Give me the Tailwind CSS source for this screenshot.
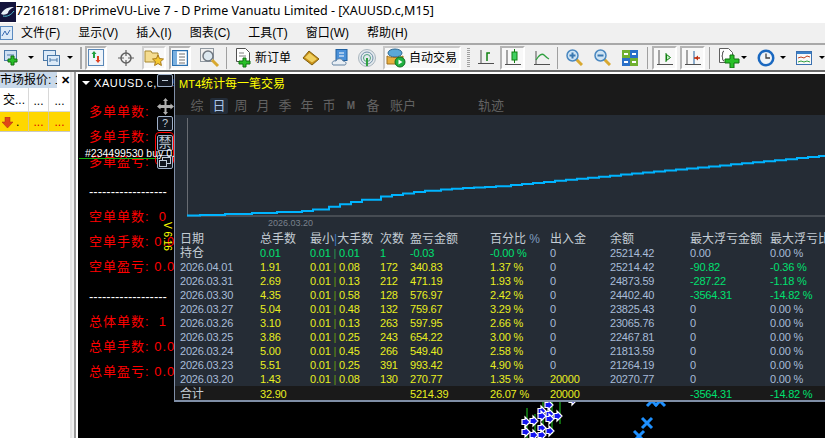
<!DOCTYPE html>
<html lang="en">
<head>
<meta charset="UTF-8">
<title>MT4</title>
<script src="https://cdn.jsdelivr.net/npm/@tailwindcss/browser@4"></script>
</head>
<body class="bg-white overflow-hidden font-['Liberation_Sans','Noto_Sans_CJK_SC',sans-serif]">
<div class="relative w-[825px] h-[438px] overflow-hidden flex flex-col">

  <!-- Title bar -->
  <div class="h-[23px] shrink-0 bg-white flex items-center">
    <svg width="16" height="20" viewBox="0 0 16 20"><rect width="16" height="20" fill="#14143c"/><path d="M1 12C4 6 9 5 14 5C10 7 8 9 8 11C6 13 3 13 1 12Z" fill="#e8f0f8"/><path d="M3 14C7 15 11 13 14 9" stroke="#50c0d0" fill="none"/></svg>
    <span class="font-['Noto_Sans','Noto_Sans_CJK_SC',sans-serif] text-[12.5px] text-black whitespace-nowrap">7216181: DPrimeVU-Live 7 - D Prime Vanuatu Limited - [XAUUSD.c,M15]</span>
  </div>

  <!-- Menu -->
  <div class="h-[20px] shrink-0 bg-[#f0f0f0] flex items-center text-[12px] text-black relative">
    <svg class="absolute left-0 top-[3px]" width="13" height="14" viewBox="0 0 13 14"><rect x="0.5" y="0.5" width="12" height="13" fill="#dceaf8" stroke="#5a8ac0"/><path d="M2 10L5 5L7 9L10 4" stroke="#3a6ab0" fill="none"/></svg>
    <div class="flex gap-[18px] pl-[21px] whitespace-nowrap">
      <span>文件(F)</span><span>显示(V)</span><span>插入(I)</span><span>图表(C)</span><span>工具(T)</span><span>窗口(W)</span><span>帮助(H)</span>
    </div>
  </div>

  <!-- Toolbar -->
  <div class="h-[29px] shrink-0 bg-[#f0f0f0] border-t-2 border-t-[#a8a8a8] border-b-2 border-b-[#6a6a6a] flex items-center">
    <svg class="ml-[4px] w-[17px] h-[18px]" viewBox="0 0 17 18"><rect x="0.5" y="1.5" width="12" height="10" fill="#cfe0f2" stroke="#4a78a8"/><path d="M3 6h7" stroke="#4a78a8"/><path d="M7 7h3v3h3v3h-3v3H7v-3H4v-3h3z" fill="#28c028" stroke="#107010"/></svg>
    <div class="ml-[7px] w-0 h-0 border-x-[3px] border-x-transparent border-t-[3px] border-t-black"></div>
    <svg class="ml-[9px] w-[17px] h-[18px]" viewBox="0 0 17 18"><rect x="0.5" y="1.5" width="12" height="10" fill="#dceaf8" stroke="#4a78a8"/><rect x="4.5" y="6.5" width="12" height="10" fill="#dceaf8" stroke="#4a78a8"/><path d="M7 11h7M7 9v4M14 9v4" stroke="#4a78a8"/></svg>
    <div class="ml-[7px] w-0 h-0 border-x-[3px] border-x-transparent border-t-[3px] border-t-black"></div>
    <div class="ml-[7px] w-[2px] h-[22px] bg-[#a8a8a8]"></div>
    <div class="ml-[3px] w-[22px] h-[24px] bg-[#f8f8f8] border-2 border-t-[#b4b4b4] border-l-[#b4b4b4] border-r-white border-b-white flex items-center justify-center">
      <svg width="16" height="17" viewBox="0 0 16 17"><rect x="0.5" y="0.5" width="15" height="16" fill="#eef4fa" stroke="#5a88b8"/><path d="M5 9V5H3.5L6 2l2.500 3H7v4z" fill="#20a040"/><path d="M9 7v4H7.500L10 14l2.500-3H11V7z" fill="#e04020"/></svg>
    </div>
    <svg class="ml-[11px] w-[16px] h-[16px]" viewBox="0 0 16 16" fill="none" stroke="#606060"><circle cx="8" cy="8" r="5" stroke-width="1.500"/><path d="M8 0v6M8 10v6M0 8h6M10 8h6" stroke-width="1.200"/></svg>
    <div class="ml-[8px] w-[24px] h-[24px] bg-[#f8f8f8] border-2 border-t-[#d0d0d0] border-l-[#d0d0d0] border-r-white border-b-white flex items-center justify-center">
      <svg width="20" height="19" viewBox="0 0 20 19"><path d="M1 3h6l1 2h6v9H1z" fill="#f4dc90" stroke="#a88830"/><path d="M14 7l1.600 3.600 3.900.4-2.900 2.600.8 3.900-3.400-2-3.400 2 .8-3.900-2.900-2.600 3.900-.4z" fill="#f4c830" stroke="#a87818"/></svg>
    </div>
    <div class="ml-[3px] w-[22px] h-[24px] bg-[#f8f8f8] border-2 border-t-[#b4b4b4] border-l-[#b4b4b4] border-r-white border-b-white flex items-center justify-center">
      <svg width="16" height="16" viewBox="0 0 16 16"><rect x="0.5" y="0.5" width="15" height="15" fill="#fff" stroke="#2a70b0" stroke-width="1.500"/><rect x="1" y="1" width="4" height="14" fill="#7ab0e0"/><path d="M7 4h6M7 7h6M7 10h6M7 13h6" stroke="#707070"/></svg>
    </div>
    <svg class="ml-[9px] w-[20px] h-[20px]" viewBox="0 0 20 20"><rect x="0.5" y="0.5" width="13" height="13" fill="#f0f0f0" stroke="#9098a0"/><circle cx="8" cy="8" r="5" fill="#dce8f0" stroke="#707880" stroke-width="1.500"/><path d="M12 12l6 6" stroke="#d8a830" stroke-width="3"/></svg>
    <div class="ml-[6px] w-[1px] h-[22px] bg-[#a0a0a0]"></div>
    <svg class="ml-[9px] w-[15px] h-[20px] overflow-visible" viewBox="0 0 15 20"><path d="M0.500 0.500h9l4 4v9h-13z" fill="#fff" stroke="#505050"/><path d="M3 5h5M3 8h7" stroke="#808080"/><path d="M7 10h3v3h4v3h-4v3H7v-3H3v-3h4z" fill="#28c028" stroke="#107010"/></svg>
    <span class="ml-[4px] w-[36px] text-[12px] text-black whitespace-nowrap">新订单</span>
    <svg class="ml-[11px] w-[18px] h-[16px]" viewBox="0 0 18 16"><path d="M1 8L7 1L17 9L10 15Z" fill="#c89018" stroke="#806010"/><path d="M3 7.500L7.500 3L15 9L10 12.500Z" fill="#f0d060"/></svg>
    <svg class="ml-[11px] w-[18px] h-[18px]" viewBox="0 0 18 18"><rect x="5" y="0.500" width="11" height="11" fill="#4a90d8" stroke="#2060a0"/><path d="M8 4h5M8 7h5" stroke="#fff"/><path d="M2 16c-2-2 0-5 3-4 1-3 6-3 7 0 3 0 4 3 2 4z" fill="#e8eef4" stroke="#6080a0"/></svg>
    <svg class="ml-[9px] w-[18px] h-[18px]" viewBox="0 0 18 18" fill="none"><circle cx="9" cy="9" r="8.500" fill="#e4eaee" stroke="#a8b4bc"/><circle cx="9" cy="9" r="6" stroke="#7090a8"/><circle cx="9" cy="9" r="3.500" stroke="#50a080"/><path d="M9 9v8" stroke="#30a040" stroke-width="2"/></svg>
    <div class="ml-[7px] w-[78px] h-[24px] bg-[#f8f8f8] border-2 border-t-[#c8c8c8] border-l-[#c8c8c8] border-r-white border-b-white flex items-center pl-[1px]">
      <svg width="21" height="20" viewBox="0 0 21 20"><ellipse cx="9" cy="5" rx="7" ry="4" fill="#5aa8d8" stroke="#306890"/><path d="M1 8c3 2 13 2 16 0v8H1z" fill="#e8b040" stroke="#a07020"/><circle cx="14" cy="14" r="5" fill="#20b040" stroke="#107020"/><path d="M12.500 11.500v5l4-2.500z" fill="#fff"/></svg>
      <span class="ml-[2px] text-[12px] text-black whitespace-nowrap">自动交易</span>
    </div>
    <div class="ml-[6px] w-[3px] h-[20px] bg-[repeating-linear-gradient(to_bottom,#a0a0a0_0,#a0a0a0_1px,transparent_1px,transparent_2px)]"></div>
    <svg class="ml-[8px] w-[16px] h-[16px]" viewBox="0 0 16 16" fill="none"><path d="M3 0v14M0 13.500h16" stroke="#505050"/><path d="M9 11V3h3" stroke="#108010" stroke-width="1.500"/></svg>
    <div class="ml-[6px] w-[25px] h-[24px] bg-[#f8f8f8] border-2 border-t-[#b4b4b4] border-l-[#b4b4b4] border-r-white border-b-white flex items-center justify-center">
      <svg width="16" height="17" viewBox="0 0 16 17" fill="none"><path d="M2 1v15M0 15.500h16" stroke="#505050"/><path d="M9.500 0v14" stroke="#108010"/><rect x="7" y="3" width="5" height="8" fill="#40d060" stroke="#108010"/></svg>
    </div>
    <svg class="ml-[9px] w-[16px] h-[16px]" viewBox="0 0 16 16" fill="none"><path d="M2 1v14M0 14.500h16" stroke="#505050"/><path d="M2 10C5 5 8 3 10 5C12 7 13 8 15 9" stroke="#30a040" stroke-width="1.300"/></svg>
    <div class="ml-[7px] w-[1px] h-[22px] bg-[#a0a0a0]"></div>
    <svg class="ml-[8px] w-[17px] h-[17px]" viewBox="0 0 17 17"><path d="M10 10l6 6" stroke="#d8a830" stroke-width="3"/><circle cx="6.500" cy="6.500" r="5.500" fill="#cfe4f4" stroke="#4a88c0" stroke-width="1.500"/><path d="M3.500 6.500h6M6.500 3.500v6" stroke="#3a78b0" stroke-width="2"/></svg>
    <svg class="ml-[11px] w-[17px] h-[17px]" viewBox="0 0 17 17"><path d="M10 10l6 6" stroke="#d8a830" stroke-width="3"/><circle cx="6.500" cy="6.500" r="5.500" fill="#cfe4f4" stroke="#4a88c0" stroke-width="1.500"/><path d="M3.500 6.500h6" stroke="#3a78b0" stroke-width="2"/></svg>
    <svg class="ml-[11px] w-[16px] h-[16px]" viewBox="0 0 16 16"><rect width="8" height="8" fill="#70b030"/><rect x="8" width="8" height="8" fill="#2a70c8"/><rect y="8" width="8" height="8" fill="#2a70c8"/><rect x="8" y="8" width="8" height="8" fill="#70b030"/><path d="M2 4h4M10 4h4M2 12h4M10 12h4" stroke="#fff" stroke-width="2"/></svg>
    <div class="ml-[9px] w-[1px] h-[22px] bg-[#a0a0a0]"></div>
    <div class="ml-[4px] w-[25px] h-[24px] bg-[#f8f8f8] border-2 border-t-[#b4b4b4] border-l-[#b4b4b4] border-r-white border-b-white flex items-center justify-center">
      <svg width="16" height="16" viewBox="0 0 16 16" fill="none"><path d="M2 0v15M0 14.500h16" stroke="#505050"/><path d="M9 3v9M9.500 4.500l4 3-4 3z" stroke="#108010" fill="#c8f0c8"/></svg>
    </div>
    <div class="ml-[3px] w-[25px] h-[24px] bg-[#f8f8f8] border-2 border-t-[#b4b4b4] border-l-[#b4b4b4] border-r-white border-b-white flex items-center justify-center">
      <svg width="16" height="16" viewBox="0 0 16 16" fill="none"><path d="M2 0v15M0 14.500h16" stroke="#505050"/><path d="M9 1v13" stroke="#2060a0"/><path d="M9 8h6" stroke="#c03010" stroke-width="1.500"/><path d="M10 8l3-2.500v5z" fill="#c03010"/></svg>
    </div>
    <div class="ml-[4px] w-[1px] h-[22px] bg-[#a0a0a0]"></div>
    <svg class="ml-[9px] w-[22px] h-[20px]" viewBox="0 0 22 20"><path d="M0.500 0.500h9l4 4v10h-13z" fill="#fff" stroke="#606060"/><path d="M5 3C3 3 4 7 3 8C4 9 3 13 5 13" stroke="#404040" fill="none"/><path d="M11 7h4v4h5v4h-5v5h-4v-5H6v-4h5z" fill="#28c028" stroke="#107010"/></svg>
    <div class="ml-0 w-0 h-0 border-x-[3px] border-x-transparent border-t-[3px] border-t-black"></div>
    <svg class="ml-[10px] w-[18px] h-[18px]" viewBox="0 0 18 18"><circle cx="9" cy="9" r="8.500" fill="#1a68c0"/><circle cx="9" cy="9" r="6" fill="#f0f4f8"/><path d="M9 4.500V9h4" stroke="#404040" stroke-width="1.300" fill="none"/></svg>
    <div class="ml-[5px] w-0 h-0 border-x-[3px] border-x-transparent border-t-[3px] border-t-black"></div>
    <svg class="ml-[10px] w-[16px] h-[14px]" viewBox="0 0 16 14"><rect x="0.500" y="0.500" width="15" height="13" fill="#f8f8f8" stroke="#3a70b0"/><rect x="1" y="1" width="14" height="2" fill="#3a80c8"/><path d="M2 7l3-1 3 1 3-2 3 1" stroke="#c04020" fill="none"/><path d="M2 11l3-1 3 1 3-1 3 1" stroke="#30a040" fill="none"/></svg>
    <div class="ml-[7px] w-0 h-0 border-x-[3px] border-x-transparent border-t-[3px] border-t-black"></div>
  </div>

  <!-- Main -->
  <div class="flex-1 flex min-h-0">
    <!-- Market watch -->
    <div class="w-[70px] shrink-0 bg-white text-[12px] text-black">
      <div class="h-[16px] flex items-center">
        <span class="w-[57px] h-[16px] bg-[#c9d9ea] whitespace-nowrap overflow-hidden leading-[16px]">市场报价: 1</span>
        <span class="ml-[4px] text-[11px] font-bold leading-none">✕</span>
      </div>
      <div class="h-[24px] grid grid-cols-[29px_20px_21px] border-b border-[#d8d8d8]">
        <span class="leading-[24px] pl-[3px] border-r border-[#d8d8d8] whitespace-nowrap overflow-hidden">交...</span>
        <span class="leading-[26px] text-center border-r border-[#d8d8d8]">...</span>
        <span class="leading-[26px] text-center">...</span>
      </div>
      <div class="h-[20px] grid grid-cols-[29px_20px_21px] bg-[#ffd700] border-b border-[#c8c8c8] text-[#e00000]">
        <span class="flex items-center pl-[2px] border-r border-[#d8c890]">
          <svg width="11" height="11" viewBox="0 0 11 11"><path d="M3 0h5v5h3L5.500 11 0 5h3z" fill="#e04818" stroke="#a83010" stroke-width="0.500"/></svg>
          <span class="ml-[3px] text-black leading-[16px]">.</span>
        </span>
        <span class="leading-[20px] text-center border-r border-[#d8c890]">...</span>
        <span class="leading-[20px] text-center">...</span>
      </div>
    </div>
    <div class="w-[2px] shrink-0 bg-[#e4e4e4]"></div>
    <div class="w-[2px] shrink-0 bg-[#f0f0f0]"></div>
    <div class="w-[2px] shrink-0 bg-[#9a9a9a]"></div>
    <div class="w-[2px] shrink-0 bg-white"></div>

    <!-- Chart window -->
    <div class="relative flex-1 bg-black border-t-[2px] border-t-white overflow-hidden">
      <div class="flex items-center h-[16px] mt-[1px] pl-[4px] text-white text-[11px] tracking-[0.6px] whitespace-nowrap">
        <div class="w-0 h-0 border-x-[4px] border-x-transparent border-t-[4px] border-t-white"></div>
        <span class="ml-[4px]">XAUUSD.c,M15</span>
      </div>

      <!-- Indicator labels -->
      <div class="pt-[8px] pl-[11px] text-[#ff0000] text-[13px] tracking-[1px] whitespace-nowrap">
        <div class="h-[25px] leading-[25px]">多单单数:</div>
        <div class="h-[25px] leading-[25px]">多单手数:</div>
        <div class="h-[25px] leading-[25px]">多单盈亏:</div>
        <div class="h-[25px] mt-[5px] leading-[25px] text-white tracking-normal">------------------</div>
        <div class="h-[25px] leading-[25px]">空单单数:&nbsp;&nbsp;0</div>
        <div class="h-[25px] leading-[25px]">空单手数: 0.0</div>
        <div class="h-[25px] leading-[25px]">空单盈亏: 0.0</div>
        <div class="h-[25px] mt-[5px] leading-[25px] text-white tracking-normal">------------------</div>
        <div class="h-[25px] leading-[25px]">总体单数:&nbsp;&nbsp;1</div>
        <div class="h-[25px] leading-[25px]">总单手数: 0.0</div>
        <div class="h-[25px] leading-[25px]">总单盈亏: 0.0</div>
      </div>

      <!-- Order line -->
      <div class="absolute left-[1px] top-[84px] w-[78px] h-[1px] bg-[#10b010]"></div>

      <!-- Version tag -->
      <span class="absolute left-[84px] top-[148px] [writing-mode:vertical-rl] text-[#ffff00] text-[10px] leading-none">V 6.16</span>

      <!-- Chart object buttons -->
      <div class="absolute left-[77px] top-[58px] w-[19px] h-[33px] rounded-[4px] border border-[#ff0000]"></div>
      <div class="absolute left-[79px] top-[0px] w-[16px] h-[13px] bg-[#10141c] border border-[#9fb0c8] rounded-[2px] flex items-center justify-center"><div class="w-[6px] h-[1px] bg-[#c0ccd8]"></div></div>
      <svg class="absolute left-[79px] top-[24px]" width="17" height="17" viewBox="0 0 17 17"><path d="M8.500 0l2.500 3H9.500v4H13.500V5.500L17 8.500l-3.500 3V10H9.500v4H11l-2.500 3L6 14h1.500v-4H3.500v1.500L0 8.500l3.500-3V7H7.500V3H6z" fill="#b0b0b0"/></svg>
      <div class="absolute left-[79px] top-[42px] w-[16px] h-[15px] bg-[#10141c] border border-[#9fb0c8] rounded-[2px] text-[#c0ccd8] text-[11px] leading-[13px] text-center">?</div>
      <div class="absolute left-[79px] top-[61px] w-[16px] h-[16px] bg-[#10141c] border border-[#9fb0c8] rounded-[2px] text-[#c0ccd8] text-[13px] leading-[14px] text-center overflow-hidden">禁</div>
      <div class="absolute left-[79px] top-[81px] w-[16px] h-[14px] bg-[#10141c] border border-[#9fb0c8] rounded-[2px] flex items-center justify-center">
        <svg width="12" height="10" viewBox="0 0 12 10" fill="none" stroke="#c0ccd8"><rect x="3.500" y="0.500" width="8" height="6"/><rect x="0.500" y="3.500" width="7" height="6" fill="#10141c"/></svg>
      </div>
      <span class="absolute left-[7px] top-[72px] text-white text-[10.5px] whitespace-nowrap">#234499530 buy 0.01</span>

      <!-- Candles and order marks below the panel -->
      <svg class="absolute left-[0px] top-[0px]" width="747" height="364" viewBox="78 74 747 364">
        <defs>
          <g id="buy-arrow"><path d="M-3 -2.500H0V-5L5 0L0 5V2.500H-3Z" fill="#1414f0" stroke="#fff" stroke-width="1.200"/></g>
          <g id="sell-cross"><path d="M-5 -5L5 5M5 -5L-5 5" stroke="#1e90ff" stroke-width="3"/></g>
        </defs>
        <path d="M527 408V438M535 414V438M543 402V438M552 402V434M560 402V424" stroke="#20d020"/>
        <use href="#buy-arrow" x="525" y="422"/><use href="#buy-arrow" x="533" y="421"/>
        <use href="#buy-arrow" x="541" y="411"/><use href="#buy-arrow" x="541" y="416"/>
        <use href="#buy-arrow" x="548" y="405"/><use href="#buy-arrow" x="549" y="414"/>
        <use href="#buy-arrow" x="549" y="419"/><use href="#buy-arrow" x="557" y="416"/>
        <use href="#buy-arrow" x="525" y="432"/><use href="#buy-arrow" x="533" y="435"/>
        <use href="#buy-arrow" x="541" y="428"/><use href="#buy-arrow" x="541" y="435"/>
        <use href="#buy-arrow" x="549" y="431"/><use href="#buy-arrow" x="572" y="400"/>
        <use href="#sell-cross" x="652" y="401"/><use href="#sell-cross" x="660" y="401"/>
        <use href="#sell-cross" x="647" y="423"/><use href="#sell-cross" x="639" y="436"/>
      </svg>
    </div>
  </div>

  <!-- Stats panel -->
  <div class="absolute left-[174px] top-[74px] w-[651px] h-[328px] border-l border-l-[#7f8ea6] border-b-2 border-b-[#7f8ea6] bg-[#252c35] flex flex-col overflow-hidden">
    <div class="h-[21px] shrink-0 bg-[#1a1a1a] pl-[4px] text-[#ffff00] text-[12px] leading-[21px] whitespace-nowrap"><span class="text-[11px]">MT4</span>统计每一笔交易</div>
    <div class="h-[20px] shrink-0 bg-[#1a1a1a] pl-[11px] pt-[1px] flex items-center text-[#626262] text-[13px] leading-[18px] whitespace-nowrap">
      <span class="w-[22px] text-center">综</span>
      <span class="w-[18px] mx-[2px] h-[16px] leading-[16px] text-center bg-[#232c38] text-[#a8c4e8] rounded-[2px]">日</span>
      <span class="w-[22px] text-center">周</span>
      <span class="w-[22px] text-center">月</span>
      <span class="w-[22px] text-center">季</span>
      <span class="w-[22px] text-center">年</span>
      <span class="w-[22px] text-center">币</span>
      <span class="w-[22px] text-center text-[10px] font-bold">M</span>
      <span class="w-[22px] text-center">备</span>
      <span class="w-[38px] ml-[0px] text-center">账户</span>
      <span class="w-[38px] ml-[50px] text-center">轨迹</span>
    </div>
    <svg class="shrink-0" width="650" height="113" viewBox="175 115 650 113">
      <path d="M187.500 118V216M187 216H825" stroke="#686c72" fill="none"/>
      <path id="equity-line" stroke="#00b4ff" stroke-width="2" fill="none"/>
      <text x="268" y="226" fill="#79818c" font-size="9" font-family="Liberation Sans">2026.03.20</text>
    </svg>
    <div id="stats-table" class="pt-[4px] text-[11px] tracking-[-0.2px] leading-[14px] whitespace-nowrap">
      <div class="grid grid-cols-[80px_50px_70px_30px_80px_60px_60px_80px_80px_80px] pl-[5px] h-[14px] text-[#c4ccd4] text-[12px] tracking-normal">
        <span>日期</span><span>总手数</span><span>最小<span class="text-[#3a78c0]">|</span>大手数</span><span>次数</span><span>盈亏金额</span><span>百分比<span class="text-[#7f9cc0]"> %</span></span><span>出入金</span><span>余额</span><span>最大浮亏金额</span><span>最大浮亏比</span>
      </div>
    </div>
    <div class="grid grid-cols-[80px_50px_70px_30px_80px_60px_60px_80px_80px_80px] pl-[5px] h-[15px] bg-[#1a1a1a] text-[11px] tracking-[-0.2px] leading-[16px] text-[#e8ee20] whitespace-nowrap">
      <span class="text-[#c4ccd4] text-[12px]">合计</span><span>32.90</span><span></span><span></span><span>5214.39</span><span>26.07 %</span><span>20000</span><span></span><span class="text-[#00e070]">-3564.31</span><span class="text-[#00e070]">-14.82 %</span>
    </div>
  </div>
</div>

<script>
// date, lots, max lot, count, profit, pct, flow, balance, float, floatPct
const rows = [
  ['2026.04.01','1.91','0.08','172','340.83','1.37 %','0','25214.42','-90.82','-0.36 %'],
  ['2026.03.31','2.69','0.13','212','471.19','1.93 %','0','24873.59','-287.22','-1.18 %'],
  ['2026.03.30','4.35','0.58','128','576.97','2.42 %','0','24402.40','-3564.31','-14.82 %'],
  ['2026.03.27','5.04','0.48','132','759.67','3.29 %','0','23825.43','0','0.00 %'],
  ['2026.03.26','3.10','0.13','263','597.95','2.66 %','0','23065.76','0','0.00 %'],
  ['2026.03.25','3.86','0.25','243','654.22','3.00 %','0','22467.81','0','0.00 %'],
  ['2026.03.24','5.00','0.45','266','549.40','2.58 %','0','21813.59','0','0.00 %'],
  ['2026.03.23','5.51','0.25','391','993.42','4.90 %','0','21264.19','0','0.00 %'],
  ['2026.03.20','1.43','0.08','130','270.77','1.35 %','20000','20270.77','0','0.00 %']
];
const table = document.getElementById('stats-table');
const gridClass = 'grid grid-cols-[80px_50px_70px_30px_80px_60px_60px_80px_80px_80px] pl-[5px] h-[14px]';

// open position row
let html = `<div class="${gridClass} text-[#00e070]">
  <span class="text-[#c4ccd4] text-[12px] tracking-normal">持仓</span><span>0.01</span>
  <span>0.01 <span class="text-[#2a9a50]">|</span> 0.01</span><span>1</span><span>-0.03</span><span>-0.00 %</span>
  <span class="text-[#a8bcd8]">0</span><span class="text-[#a8bcd8]">25214.42</span><span class="text-[#a8bcd8]">0.00</span><span class="text-[#a8bcd8]">0.00 %</span>
</div>`;

html += rows.map(r => {
  const down = r[8] !== '0';
  return `<div class="${gridClass} text-[#e8ee20]">
    <span class="text-[#a8bcd8]">${r[0]}</span><span>${r[1]}</span>
    <span>0.01 <span class="text-[#6a9a10]">|</span> ${r[2]}</span><span>${r[3]}</span><span>${r[4]}</span><span>${r[5]}</span>
    <span class="${r[6] === '0' ? 'text-[#a8bcd8]' : 'text-[#e8ee20]'}">${r[6]}</span>
    <span class="text-[#a8bcd8]">${r[7]}</span>
    <span class="${down ? 'text-[#00e070]' : 'text-[#a8bcd8]'}">${r[8]}</span>
    <span class="${down ? 'text-[#00e070]' : 'text-[#a8bcd8]'}">${r[9]}</span>
  </div>`;
}).join('');
table.insertAdjacentHTML('beforeend', html);

// stepped equity curve
const knots = [[187,215.5],[200,215],[225,214],[252,213],[277,212],[302,211],[318,209],[370,198],[430,190],[500,186],[825,155.5]];
let d = 'M187 215.5';
knots.slice(1, 6).forEach(p => { d += `H${p[0]}V${p[1]}`; });
for (let i = 6; i < knots.length; i++) {
  const [x0, y0] = knots[i - 1], [x1, y1] = knots[i];
  for (let x = x0 + 11; x <= x1; x += 11) {
    d += `H${x}V${(y0 + (y1 - y0) * (x - x0) / (x1 - x0)).toFixed(1)}`;
  }
}
d += 'H825';
document.getElementById('equity-line').setAttribute('d', d);
</script>
</body>
</html>
